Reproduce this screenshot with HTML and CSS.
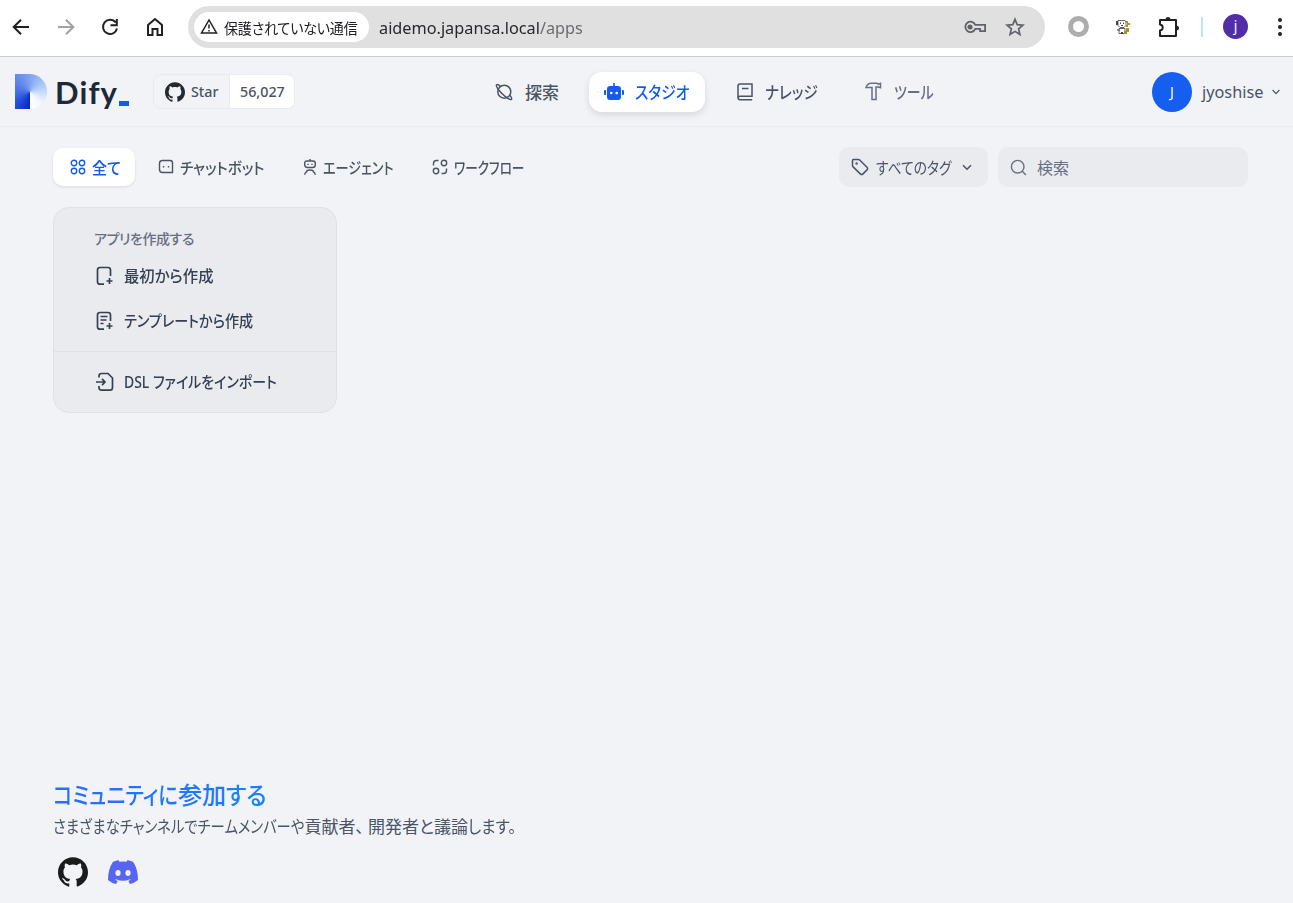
FILE: index.html
```html
<!DOCTYPE html>
<html lang="ja">
<head>
<meta charset="utf-8">
<title>Dify</title>
<link rel="stylesheet" href="styles.css">
</head>
<body>
<svg class="defs" width="0" height="0">
  <symbol id="github" viewBox="0 0 24 24"><path d="M12 .297c-6.63 0-12 5.373-12 12 0 5.303 3.438 9.8 8.205 11.385.6.113.82-.258.82-.577 0-.285-.01-1.04-.015-2.04-3.338.724-4.042-1.61-4.042-1.61C4.422 18.07 3.633 17.7 3.633 17.7c-1.087-.744.084-.729.084-.729 1.205.084 1.838 1.236 1.838 1.236 1.07 1.835 2.809 1.305 3.495.998.108-.776.417-1.305.76-1.605-2.665-.3-5.466-1.332-5.466-5.93 0-1.31.465-2.38 1.235-3.22-.135-.303-.54-1.523.105-3.176 0 0 1.005-.322 3.3 1.23.96-.267 1.98-.399 3-.405 1.02.006 2.04.138 3 .405 2.28-1.552 3.285-1.23 3.285-1.23.645 1.653.24 2.873.12 3.176.765.84 1.23 1.91 1.23 3.22 0 4.61-2.805 5.625-5.475 5.92.42.36.81 1.096.81 2.22 0 1.606-.015 2.896-.015 3.286 0 .315.21.69.825.57C20.565 22.092 24 17.592 24 12.297c0-6.627-5.373-12-12-12"/></symbol>
</svg>
<div class="browser">
  <div class="browser-nav">
    <svg width="18" height="18" viewBox="0 0 18 18" class="line w2"><path d="M17 9H2M9 1.700 1.700 9 9 16.300"/></svg>
    <svg width="18" height="18" viewBox="0 0 18 18" class="line w2 faded"><path d="M1 9h15M9 1.700 16.300 9 9 16.300"/></svg>
    <svg width="18" height="18" viewBox="0 0 18 18" class="line w2"><path d="M14.700 4.500A7.100 7.100 0 1 0 16 10.500M15.800 1v6.200H9.500"/></svg>
    <svg width="18" height="20" viewBox="0 0 18 20" class="line w2"><path d="M2 8 9 2l7 6v10h-4.500v-6h-5v6H2z"/></svg>
  </div>
  <div class="omnibox">
    <div class="security">
      <svg width="18" height="17" viewBox="0 0 18 17" class="line"><path stroke-width="1.500" d="M9 2 1.500 15h15zM9 6.500v4M9 12v1.500"/></svg>
      <span class="label security-text">保護されていない通信</span>
    </div>
    <span class="url">aidemo.japansa.local<i>/apps</i></span>
    <svg class="key" width="24" height="16" viewBox="0 0 24 16" fill="none" stroke="#5f6368" stroke-width="1.800"><path d="M12.300 5.800h9.800v6.400h-5V9.900h-4.800A5.200 5.200 0 1 1 12.300 5.800z"/><circle cx="7" cy="8" r="1.700" fill="#5f6368"/></svg>
    <svg class="star" width="20" height="20" viewBox="0 0 20 20" fill="none" stroke="#5f6368" stroke-width="1.700"><path d="m10 2.300 2.200 5.300 5.700.5-4.300 3.700 1.300 5.600-4.900-3-4.900 3 1.300-5.600-4.300-3.700 5.700-.5z"/></svg>
  </div>
  <span class="ring"></span>
  <svg class="mascot" width="16" height="16" viewBox="0 0 16 16"><path d="M3 1.500h7l1 2v3L9 8.500H5L3 6.500z" fill="#fff" stroke="#666"/><path d="M4 9.500h6v5H4z" fill="#fff" stroke="#666"/><path d="M1 2h2v4H1zM5 3.500h1v1.500H5zM8 3.500h1v1.500H8zM6 6h2v1H6zM2 10.500h3v1H2zM6 13h2v2H6z" fill="#444"/><path d="M11 2h2v2h2v2h-2v2h-2V6h1V4h-1zM11 9h3v4h-2v2H9v-3h2z" fill="#a89422"/></svg>
  <svg class="puzzle" width="22" height="22" viewBox="0 0 22 22"><path d="M2 4h16v16H2v-5.500c3.600-.5 3.600-5.500 0-6z" fill="none" stroke="#202124" stroke-width="2" stroke-linejoin="round"/><path d="M7.500 4a2.500 3 0 0 1 5 0zM18 9.500a3 2.500 0 0 1 0 5z" fill="#202124"/></svg>
  <span class="sep"></span>
  <span class="profile">j</span>
  <span class="dots"><b></b><b></b><b></b></span>
</div>

<header class="header">
  <div class="logo"><span class="mark"></span><span class="word">Dify</span><span class="cursor"></span></div>
  <div class="gh-badge">
    <div class="gh-star"><svg width="20" height="20" fill="#24292f"><use href="#github"/></svg><span>Star</span></div>
    <div class="gh-count">56,027</div>
  </div>
  <nav class="nav">
    <a class="nav-item explore"><svg width="18" height="18" viewBox="0 0 18 18" class="line w15"><circle cx="9.300" cy="8.700" r="6.500"/><path d="M5.500 3.200C3.500 1.500 2.200 1.200 1.600 1.800.6 3 4 7.500 7.200 10.800s8 6.600 9.200 5.600c.6-.6.2-2-1.400-4"/></svg><span class="label">探索</span></a>
    <a class="nav-item active"><svg width="20" height="18" viewBox="0 0 20 18"><path d="M9.200 0h1.600v3H14q3 0 3 3v8q0 3-3 3H6q-3 0-3-3V6q0-3 3-3h3.200zM0 8q0-1 1-1h1v5H1q-1 0-1-1zM18 7h1q1 0 1 1v3q0 1-1 1h-1z" fill="#155aef"/><circle cx="7.300" cy="10" r="1.300" fill="#fff"/><circle cx="12.700" cy="10" r="1.300" fill="#fff"/></svg><span class="label sx87">スタジオ</span></a>
    <a class="nav-item knowledge"><svg width="16" height="18" viewBox="0 0 16 18" class="line w15"><path d="M15.200 16.700H3A2 2 0 0 1 1 14.700V3a2 2 0 0 1 2-2h12v12.300H3a1.800 1.800 0 0 0-1.800 1.500M5 5.500h6.500"/></svg><span class="label sx86">ナレッジ</span></a>
    <a class="nav-item tools"><svg width="17" height="19" viewBox="0 0 17 19" class="line w15"><path d="M1 5.500C2 2.700 3.700 1.300 6 1.300h6l1.200.8 2.300-.8v4.500l-2.300-.8H11v12.500H7V5.500H4.500z"/></svg><span class="label sx82">ツール</span></a>
  </nav>
  <div class="account"><span class="avatar">J</span><span class="user">jyoshise</span><svg width="8" height="6" viewBox="0 0 8 6" class="line"><path d="m.6 1 3.400 3.600L7.400 1"/></svg></div>
</header>

<div class="filters">
  <a class="tab on"><svg width="16" height="16" viewBox="0 0 16 16" class="line w14"><circle cx="4" cy="4" r="2.700"/><circle cx="12" cy="4" r="2.700"/><circle cx="4" cy="12" r="2.700"/><circle cx="12" cy="12" r="2.700"/></svg><span class="label sx94">全て</span></a>
  <a class="tab chat"><svg width="16" height="16" viewBox="0 0 16 16" class="line w14"><path d="M4.500 1.500H12q2.500 0 2.500 2.500v9.500h-10q-3 0-3-3v-6q0-3 3-3z"/><path d="M5.500 7v1.500M10.500 7v1.500"/></svg><span class="label sx91">チャットボット</span></a>
  <a class="tab agent"><svg width="14" height="17" viewBox="0 0 14 17" class="line w14"><path d="M7 0v2M4 2h6q2.300 0 2.300 2.300v1.400Q12.300 8.500 9.500 8.500h-5Q1.700 8.500 1.700 5.700V4.300Q1.700 2 4 2zM5 4.700v1.200M9 4.700v1.200M1.700 15.800c0-2 1-2.600 2-3.200 0-.8 1.500-1.600 3.300-1.600s3.300.8 3.300 1.600c1 .6 2 1.200 2 3.200"/></svg><span class="label sx82">エージェント</span></a>
  <a class="tab flow"><svg width="16" height="16" viewBox="0 0 16 16" class="line w14"><circle cx="12" cy="4" r="2.700"/><circle cx="4" cy="12" r="2.700"/><path d="M1.500 6.500v-2q0-3 3-3h2M14.500 9.500v2q0 3-3 3h-2"/></svg><span class="label sx79">ワークフロー</span></a>
  <div class="tag-select"><svg width="18" height="18" viewBox="0 0 18 18" class="line w15"><path d="M1.500 2.500v5q0 .8.600 1.400l7.200 7q1.400 1.300 2.700 0l4-4q1.300-1.300 0-2.700L8.700 2q-.6-.6-1.400-.6h-5q-.8 0-.8 1.100z"/><circle cx="5.600" cy="5.500" r=".5"/></svg><span class="label sx86">すべてのタグ</span><svg width="10" height="7" viewBox="0 0 10 7" class="line w15"><path d="m1 1.200 4 4 4-4"/></svg></div>
  <div class="search"><svg width="17" height="17" viewBox="0 0 17 17" class="line w14"><circle cx="7.700" cy="7.700" r="6.300"/><path d="m12.300 12.300 3.600 3.600"/></svg><span class="label">検索</span></div>
</div>

<main class="main">
  <section class="create">
    <div class="create-title label sx96">アプリを作成する</div>
    <a class="create-row"><svg width="18" height="20" viewBox="0 0 18 20" class="line w17"><path d="M8 18.200H4Q1.500 18.200 1.500 15.700V4Q1.500 1.500 4 1.500h8q2.500 0 2.500 2.500v6M13.500 12v6M10.500 15h6"/></svg><span class="label blank">最初から作成</span></a>
    <a class="create-row second"><svg width="18" height="20" viewBox="0 0 18 20" class="line w17"><path d="M8 18.200H4Q1.500 18.200 1.500 15.700V4Q1.500 1.500 4 1.500h8q2.500 0 2.500 2.500v6M13.500 12v6M10.500 15h6M4.500 5.500h7M4.500 9h6M4.500 12.500h3"/></svg><span class="label sx91">テンプレートから作成</span></a>
    <a class="create-row import"><svg width="18" height="20" viewBox="0 0 18 20" class="line w17"><path d="M3 5.500V4Q3 1.500 5.500 1.500H12L16.500 6v9.500q0 2.700-2.700 2.700H5.500Q3 18.200 3 15.500V14M0 10h8.500M6 6.800 9 10l-3 3.200"/></svg><span class="label sx90">DSL ファイルをインポート</span></a>
  </section>
</main>

<footer class="community">
  <h2 class="label"><span class="narrow lead">コミュニティに</span>参加<span class="narrow tail">する</span></h2>
  <p class="label"><span class="narrow intro">さまざまなチャンネルでチームメンバーや</span>貢献者<span class="comma">、</span>開発者と議論<span class="narrow ending">します。</span></p>
  <div class="social">
    <svg width="30" height="30" fill="#1b1b1d"><use href="#github"/></svg>
    <svg width="30" height="24" viewBox="0 0 30 24"><path d="M10.500 0 5 1.700Q0 9 0 20q3.500 3 8 4l1.700-3-2.500-1.200.7-.6q7.100 3.200 14.200 0l.7.600-2.500 1.200 1.700 3q4.500-1 8-4Q30 9 25 1.700L19.500 0l-.9 1.700q-3.600-.5-7.200 0z" fill="#5865f2"/><ellipse cx="10" cy="13" rx="2.600" ry="2.900" fill="#f2f4f7"/><ellipse cx="20" cy="13" rx="2.600" ry="2.900" fill="#f2f4f7"/></svg>
  </div>
</footer>
</body>
</html>
```
FILE: styles.css
```css
* { box-sizing: border-box; }
body {
  margin: 0;
  width: 1293px;
  height: 903px;
  overflow: hidden;
  display: flex;
  flex-direction: column;
  background: #f1f3f7;
  color: #495464;
  font-family: "Noto Sans", "Noto Sans CJK JP", sans-serif;
  font-size: 16px;
}
svg { flex: none; display: block; }
.defs { position: absolute; }
.line { fill: none; stroke: currentColor; stroke-width: 1.2; }
.w14 { stroke-width: 1.4; }
.w15 { stroke-width: 1.5; }
.w17 { stroke-width: 1.7; }
.w2 { stroke-width: 2; }
.label { font-feature-settings: "palt"; white-space: nowrap; transform-origin: left center; }

/* Condensed kana widths */
.sx79 { transform: scaleX(.79); }
.sx82 { transform: scaleX(.82); }
.sx86 { transform: scaleX(.86); }
.sx87 { transform: scaleX(.87); }
.sx90 { transform: scaleX(.9); }
.sx91 { transform: scaleX(.91); }
.sx94 { transform: scaleX(.94); }
.narrow { display: inline-block; transform-origin: left center; }

/* Browser toolbar */
.browser {
  height: 57px;
  flex: none;
  display: flex;
  align-items: center;
  background: #fff;
  border-bottom: 1px solid #cbcacd;
  padding: 0 9px 3px 12px;
  color: #202124;
}
.browser-nav { display: flex; align-items: center; gap: 26.700px; width: 176px; }
.faded { color: #a2a2a4; }
.omnibox {
  width: 857px;
  height: 42px;
  border-radius: 21px;
  background: #e0e0e1;
  display: flex;
  align-items: center;
  padding: 0 20px 0 6px;
}
.security {
  width: 175px;
  height: 30px;
  border-radius: 15px;
  background: #fff;
  display: flex;
  align-items: center;
  gap: 6px;
  padding-left: 6px;
  margin-right: 10px;
}
.security-text { font-size: 14.500px; letter-spacing: -.2px; transform: scaleX(.968); padding-top: 1px; }
.url { font-size: 17px; color: #27282b; white-space: nowrap; transform: scaleX(.957); transform-origin: left; padding-top: 1px; }
.url i { font-style: normal; color: #6b6c6f; }
.key { margin-left: auto; margin-right: 18px; }
.ring { width: 21px; height: 21px; border: 5px solid #adadad; border-radius: 50%; margin-left: 23px; }
.mascot { margin-left: 26px; }
.puzzle { margin-left: 27px; }
.sep { width: 2px; height: 20px; background: #bfe4f2; margin-left: 21px; }
.profile {
  width: 25px; height: 25px; border-radius: 50%;
  background: #512da8; color: #fff; font-size: 14px;
  line-height: 24px; text-align: center; margin-left: 20px;
}
.dots { display: flex; flex-direction: column; gap: 3px; margin-left: 30px; }
.dots b { width: 4px; height: 4px; border-radius: 50%; background: #202124; }

/* App header */
.header {
  height: 70px;
  flex: none;
  display: flex;
  align-items: center;
  padding: 0 13px 0 15px;
  border-bottom: 1px solid #e9ebf0;
}
.logo { display: flex; align-items: center; width: 138px; }
.mark {
  width: 32px; height: 35px;
  border-radius: 0 18px 18px 0;
  background: conic-gradient(from 180deg at 15px 18px, #0326c4, #3e68e4 22%, #7c9ff0 48%, #b6d0fb 70%, #f4f8ff 88%, #fff);
}
.word { font: bold 31px/36px Lato, sans-serif; color: #1d2939; width: 63px; margin-left: 8px; letter-spacing: 1.1px; }
.cursor { width: 10px; height: 5px; background: #155aef; margin: 23px 0 0 1px; }
.gh-badge {
  display: flex;
  width: 142px; height: 35px;
  border: 1px solid #e9ebf0;
  border-radius: 8px;
  overflow: hidden;
  font-size: 14.300px;
  font-weight: 500;
  align-items: stretch;
}
.gh-star { display: flex; align-items: center; gap: 6px; width: 75px; padding-left: 11px; }
.gh-count { flex: 1; background: #fff; border-left: 1px solid #e9ebf0; display: flex; align-items: center; padding-left: 10px; }
.nav { display: flex; align-items: center; margin-left: 200px; font-size: 17px; font-weight: 500; }
.nav-item { display: flex; align-items: center; height: 40px; }
.explore { width: 94px; gap: 12px; }
.active {
  width: 116px; gap: 11px; padding-left: 15px;
  background: #fff; color: #155aef; border-radius: 13px;
  box-shadow: 0 3px 7px #1018281f;
}
.knowledge { margin-left: 32px; width: 128px; gap: 12px; }
.tools { gap: 12px; color: #676f83; }
.account { margin-left: auto; display: flex; align-items: center; }
.avatar { width: 40px; height: 40px; border-radius: 50%; background: #155eef; color: #fff; font-size: 14px; line-height: 40px; text-align: center; }
.user { width: 62px; margin: 0 8px 0 10px; padding-top: 1px; font-size: 16.300px; }

/* Filter row */
.filters { display: flex; align-items: center; margin-top: 20px; height: 40px; flex: none; padding: 0 45px 0 53px; font-size: 16px; font-weight: 500; }
.tab { display: flex; align-items: center; gap: 6px; height: 38px; }
.on { width: 82px; padding-left: 17px; background: #fff; border-radius: 10px; color: #155aef; box-shadow: 0 1px 3px #1018281a; }
.chat { margin-left: 23px; width: 145px; }
.agent { width: 129px; }
.flow { width: 100px; }
.tag-select, .search { height: 40px; border-radius: 10px; background: #e9ebef; display: flex; align-items: center; font-weight: 400; }
.tag-select { margin-left: auto; width: 149px; padding-left: 12px; gap: 7px; }
.tag-select .label { width: 79px; }
.search { margin-left: 10px; width: 250px; padding-left: 12px; gap: 10px; color: #676f83; }

/* Create card */
.main { flex: 1; padding: 20px 53px; }
.create { width: 284px; height: 206px; border: 1px solid #dfe1e7; border-radius: 16px; background: #e9ebef; color: #354052; font-weight: 500; }
.create-title { padding: 19px 0 0 40px; height: 45px; line-height: 24px; font-size: 14px; letter-spacing: -.45px; color: #676f83; }
.create-row { display: flex; align-items: center; gap: 10px; padding-left: 42px; height: 45px; font-size: 15.500px; }
.create-row .label { margin-top: -1px; }
.blank { transform: scaleX(.99); }
.import { border-top: 1px solid #dfe1e7; height: 61px; margin-top: 8px; }

/* Community */
.community { height: 127px; flex: none; padding-left: 53px; }
.community h2 { margin: 0; font-size: 24px; line-height: 38px; height: 40px; font-weight: 500; color: #1d78ff; }
.lead { transform: scaleX(.85); margin-right: -22px; color: transparent; background: linear-gradient(90deg, #296dff, #1d78ff); background-clip: text; -webkit-background-clip: text; }
.tail { transform: scaleX(.94); color: #1b80ff; }
.community p { margin: 0; font-size: 17px; line-height: 22px; }
.intro { transform: scaleX(.845); margin-right: -46px; }
.comma { margin-right: 4px; }
.ending { transform: scaleX(.92); }
.social { display: flex; align-items: center; gap: 20px; padding: 19px 0 0 5px; }
```
